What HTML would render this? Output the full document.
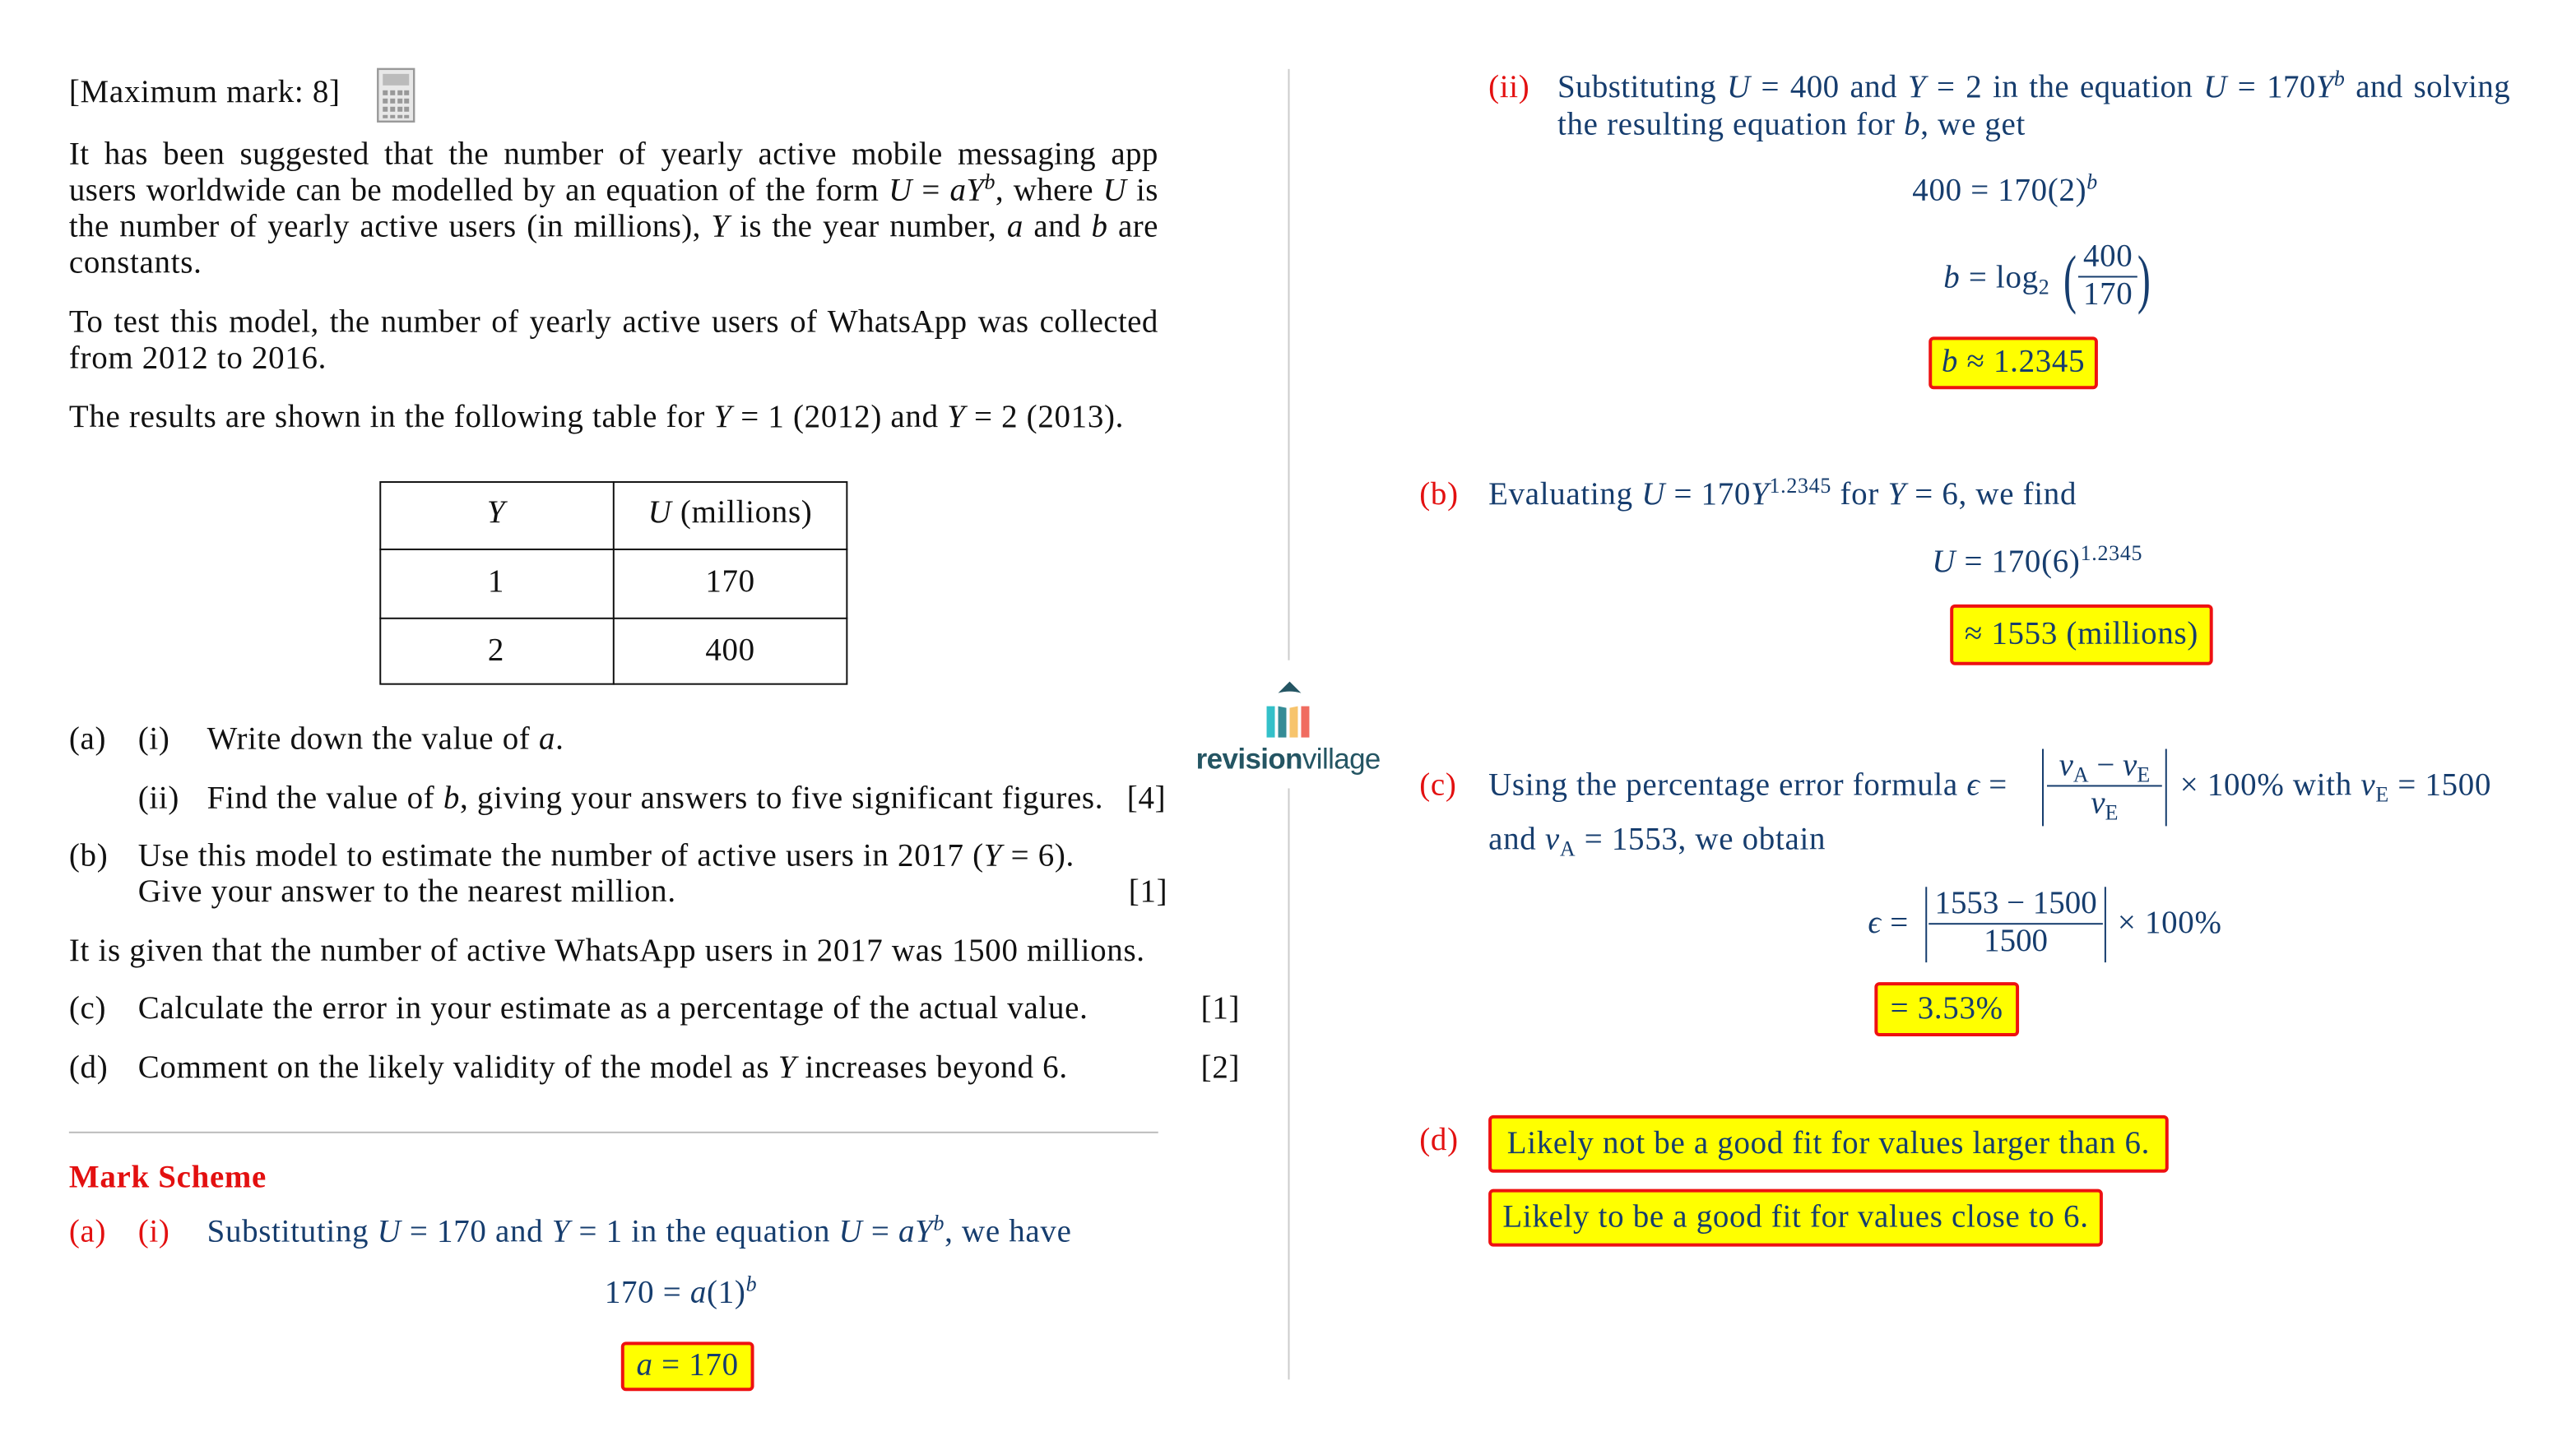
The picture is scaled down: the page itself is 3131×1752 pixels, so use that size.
<!DOCTYPE html>
<html><head><meta charset="utf-8">
<style>
html,body{margin:0;padding:0;background:#fff;width:3131px;height:1752px;overflow:hidden}
#w{position:absolute;left:0;top:0;width:1568px;height:877px;transform-origin:0 0;transform:scale(1.9968);font-family:"Liberation Serif",serif;font-size:19.5px;letter-spacing:0.35px;color:#111}
.t{position:absolute;white-space:nowrap;line-height:22px;height:22px}
.j{text-align:justify;text-align-last:justify;white-space:normal;letter-spacing:0.2px}
.n{color:#163d6e}
.r{color:#e31010}
i{font-style:italic}
sup{font-size:13px;vertical-align:7px;line-height:0}
sub{font-size:13px;vertical-align:-4px;line-height:0}
.box{position:absolute;background:#ffff00;border:2px solid #ee1111;border-radius:3px;box-sizing:border-box;color:#163d6e;text-align:center;line-height:26px;white-space:nowrap}
.frac{display:inline-block;vertical-align:middle;text-align:center;line-height:22px;white-space:nowrap}
.frac span{display:block;padding:0 3px}
.frac span.top{border-bottom:1px solid #163d6e}
</style></head><body><div id="w">

<div class="t" style="left:42px;top:46px">[Maximum mark: 8]</div>
<svg style="position:absolute;left:229px;top:41px" width="24" height="34" viewBox="0 0 24 34">
<rect x="1" y="1" width="22" height="32" fill="#e8e8e8" stroke="#999" stroke-width="1.2"/>
<rect x="4" y="4" width="16" height="7" fill="#bbb"/>
<g fill="#999"><rect x="4" y="14" width="3" height="3"/><rect x="8.5" y="14" width="3" height="3"/><rect x="13" y="14" width="3" height="3"/><rect x="17" y="14" width="3" height="3"/>
<rect x="4" y="19" width="3" height="3"/><rect x="8.5" y="19" width="3" height="3"/><rect x="13" y="19" width="3" height="3"/><rect x="17" y="19" width="3" height="3"/>
<rect x="4" y="24" width="3" height="3"/><rect x="8.5" y="24" width="3" height="3"/><rect x="13" y="24" width="3" height="3"/><rect x="17" y="24" width="3" height="3"/>
<rect x="4" y="29" width="3" height="2"/><rect x="8.5" y="29" width="3" height="2"/><rect x="13" y="29" width="3" height="2"/><rect x="17" y="29" width="3" height="2"/></g></svg>

<div class="t j" style="left:42px;top:84px;width:663px">It has been suggested that the number of yearly active mobile messaging app</div>
<div class="t j" style="left:42px;top:106px;width:663px">users worldwide can be modelled by an equation of the form <i>U</i> = <i>aY</i><sup><i>b</i></sup>, where <i>U</i> is</div>
<div class="t j" style="left:42px;top:128px;width:663px">the number of yearly active users (in millions), <i>Y</i> is the year number, <i>a</i> and <i>b</i> are</div>
<div class="t" style="left:42px;top:150px">constants.</div>
<div class="t j" style="left:42px;top:186px;width:663px">To test this model, the number of yearly active users of WhatsApp was collected</div>
<div class="t" style="left:42px;top:208px">from 2012 to 2016.</div>
<div class="t" style="left:42px;top:244px">The results are shown in the following table for <i>Y</i> = 1 (2012) and <i>Y</i> = 2 (2013).</div>

<div style="position:absolute;left:231px;top:293px;width:285px;height:124px;border:1px solid #111;box-sizing:border-box"></div>
<div style="position:absolute;left:373px;top:293px;width:1px;height:124px;background:#111"></div>
<div style="position:absolute;left:231px;top:334px;width:285px;height:1px;background:#111"></div>
<div style="position:absolute;left:231px;top:376px;width:285px;height:1px;background:#111"></div>
<div class="t" style="left:231px;width:142px;top:302px;text-align:center"><i>Y</i></div>
<div class="t" style="left:373px;width:143px;top:302px;text-align:center"><i>U</i> (millions)</div>
<div class="t" style="left:231px;width:142px;top:344px;text-align:center">1</div>
<div class="t" style="left:373px;width:143px;top:344px;text-align:center">170</div>
<div class="t" style="left:231px;width:142px;top:386px;text-align:center">2</div>
<div class="t" style="left:373px;width:143px;top:386px;text-align:center">400</div>

<div class="t" style="left:42px;top:440px">(a)</div>
<div class="t" style="left:84px;top:440px">(i)</div>
<div class="t" style="left:126px;top:440px">Write down the value of <i>a</i>.</div>
<div class="t" style="left:84px;top:476px">(ii)</div>
<div class="t" style="left:126px;top:476px">Find the value of <i>b</i>, giving your answers to five significant figures.</div>
<div class="t" style="left:686px;top:476px">[4]</div>
<div class="t" style="left:42px;top:511px">(b)</div>
<div class="t" style="left:84px;top:511px">Use this model to estimate the number of active users in 2017 (<i>Y</i> = 6).</div>
<div class="t" style="left:84px;top:533px">Give your answer to the nearest million.</div>
<div class="t" style="left:687px;top:533px">[1]</div>
<div class="t" style="left:42px;top:569px">It is given that the number of active WhatsApp users in 2017 was 1500 millions.</div>
<div class="t" style="left:42px;top:604px">(c)</div>
<div class="t" style="left:84px;top:604px">Calculate the error in your estimate as a percentage of the actual value.</div>
<div class="t" style="left:731px;top:604px">[1]</div>
<div class="t" style="left:42px;top:640px">(d)</div>
<div class="t" style="left:84px;top:640px">Comment on the likely validity of the model as <i>Y</i> increases beyond 6.</div>
<div class="t" style="left:731px;top:640px">[2]</div>

<div style="position:absolute;left:42px;top:689px;width:663px;height:1px;background:#bbb"></div>
<div class="t r" style="left:42px;top:707px;font-weight:bold;font-size:19.5px">Mark Scheme</div>
<div class="t r" style="left:42px;top:740px">(a)</div>
<div class="t r" style="left:84px;top:740px">(i)</div>
<div class="t n" style="left:126px;top:740px">Substituting <i>U</i> = 170 and <i>Y</i> = 1 in the equation <i>U</i> = <i>aY</i><sup><i>b</i></sup>, we have</div>
<div class="t n" style="left:368px;top:777px">170 = <i>a</i>(1)<sup><i>b</i></sup></div>
<div class="box" style="left:378px;top:817px;width:81px;height:30px"><i>a</i> = 170</div>

<div style="position:absolute;left:784px;top:42px;width:1px;height:360px;background:#ccc"></div>
<div style="position:absolute;left:784px;top:480px;width:1px;height:360px;background:#ccc"></div>
<svg style="position:absolute;left:768px;top:414px" width="34" height="38" viewBox="0 0 34 38">
<path d="M10 8 L17 1 L24 8 Q17 6 10 8Z" fill="#245563"/>
<path d="M3 16 L8 16 L8 35 L3 35Z" fill="#33c0c9"/>
<path d="M10 16 L15 17 L15 35 L10 35Z" fill="#358c96"/>
<path d="M17 17 L22 16 L22 35 L17 35Z" fill="#f7c46c"/>
<path d="M24 16 L29 16 L29 35 L24 35Z" fill="#f06c60"/>
</svg>
<div style="position:absolute;left:728px;top:452px;font-family:'Liberation Sans',sans-serif;font-size:17.5px;color:#245563;white-space:nowrap;letter-spacing:-0.3px"><b>revision</b>village</div>

<div class="t r" style="left:906px;top:43px">(ii)</div>
<div class="t n j" style="left:948px;top:43px;width:580px">Substituting <i>U</i> = 400 and <i>Y</i> = 2 in the equation <i>U</i> = 170<i>Y</i><sup><i>b</i></sup> and solving</div>
<div class="t n" style="left:948px;top:66px">the resulting equation for <i>b</i>, we get</div>
<div class="t n" style="left:1164px;top:106px">400 = 170(2)<sup><i>b</i></sup></div>
<div class="t n" style="left:1183px;top:159px"><i>b</i> = log<sub>2</sub></div>
<div class="n" style="position:absolute;left:1256px;top:144px;font-size:40px;line-height:52px;transform:scaleX(0.6);transform-origin:0 0">(</div>
<div class="n frac" style="position:absolute;left:1265px;top:146px"><span class="top">400</span><span>170</span></div>
<div class="n" style="position:absolute;left:1301px;top:144px;font-size:40px;line-height:52px;transform:scaleX(0.6);transform-origin:0 0">)</div>
<div class="box" style="left:1174px;top:205px;width:103px;height:32px;line-height:28px"><i>b</i> ≈ 1.2345</div>

<div class="t r" style="left:864px;top:291px">(b)</div>
<div class="t n" style="left:906px;top:291px">Evaluating <i>U</i> = 170<i>Y</i><sup>1.2345</sup> for <i>Y</i> = 6, we find</div>
<div class="t n" style="left:1176px;top:332px"><i>U</i> = 170(6)<sup>1.2345</sup></div>
<div class="box" style="left:1187px;top:368px;width:160px;height:37px;line-height:33px">≈ 1553 (millions)</div>

<div class="t r" style="left:864px;top:468px">(c)</div>
<div class="t n" style="left:906px;top:468px">Using the percentage error formula <i>ϵ</i> =</div>
<div style="position:absolute;left:1243px;top:456px;width:1px;height:47px;background:#163d6e"></div>
<div class="n frac" style="position:absolute;left:1246px;top:456px;width:70px;letter-spacing:0"><span class="top"><i>v</i><sub>A</sub> − <i>v</i><sub>E</sub></span><span><i>v</i><sub>E</sub></span></div>
<div style="position:absolute;left:1318px;top:456px;width:1px;height:47px;background:#163d6e"></div>
<div class="t n" style="left:1327px;top:468px">× 100% with <i>v</i><sub>E</sub> = 1500</div>
<div class="t n" style="left:906px;top:501px">and <i>v</i><sub>A</sub> = 1553, we obtain</div>
<div class="t n" style="left:1137px;top:552px"><i>ϵ</i> =</div>
<div style="position:absolute;left:1172px;top:540px;width:1px;height:46px;background:#163d6e"></div>
<div class="n frac" style="position:absolute;left:1174px;top:540px;width:106px;letter-spacing:0"><span class="top">1553 − 1500</span><span>1500</span></div>
<div style="position:absolute;left:1281px;top:540px;width:1px;height:46px;background:#163d6e"></div>
<div class="t n" style="left:1289px;top:552px">× 100%</div>
<div class="box" style="left:1141px;top:598px;width:88px;height:33px;line-height:29px">= 3.53%</div>

<div class="t r" style="left:864px;top:684px">(d)</div>
<div class="box" style="left:906px;top:679px;width:414px;height:35px;line-height:31px">Likely not be a good fit for values larger than 6.</div>
<div class="box" style="left:906px;top:724px;width:374px;height:35px;line-height:31px">Likely to be a good fit for values close to 6.</div>

</div></body></html>
